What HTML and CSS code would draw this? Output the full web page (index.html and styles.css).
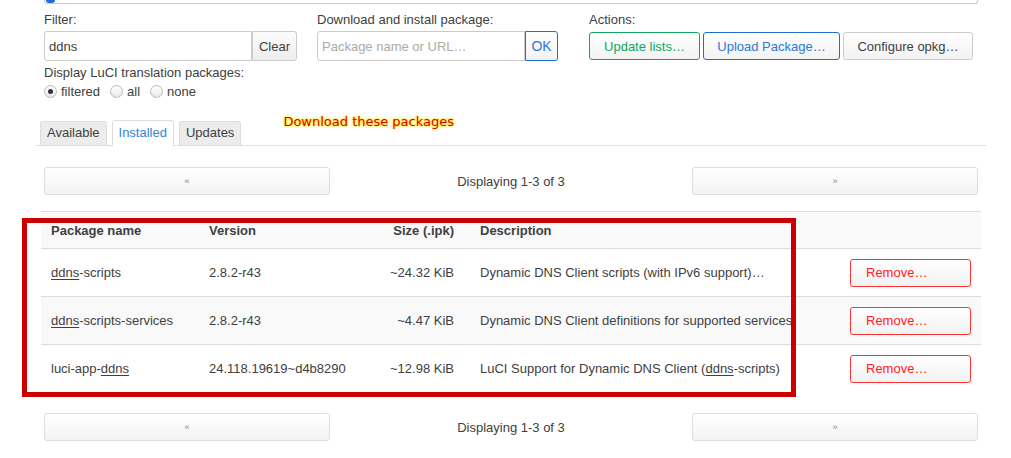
FILE: index.html
```html
<!DOCTYPE html>
<html>
<head>
<meta charset="utf-8">
<link rel="stylesheet" href="styles.css">
</head>
<body>
<div class="page">
  <div class="topbar"><span class="thumb"></span></div>

  <div class="controls">
    <div class="ctl ctl-filter">
      <div class="lbl">Filter:</div>
      <div class="group">
        <input class="inp inp-filter" type="text" value="ddns">
        <button class="btn btn-addon">Clear</button>
      </div>
      <div class="lbl lbl2">Display LuCI translation packages:</div>
      <div class="radios">
        <span class="radio checked"></span><span class="rlbl">filtered</span>
        <span class="radio"></span><span class="rlbl">all</span>
        <span class="radio"></span><span class="rlbl">none</span>
      </div>
    </div>
    <div class="ctl ctl-dl">
      <div class="lbl">Download and install package:</div>
      <div class="group">
        <input class="inp inp-dl" type="text" placeholder="Package name or URL…">
        <button class="btn btn-ok">OK</button>
      </div>
    </div>
    <div class="ctl ctl-actions">
      <div class="lbl">Actions:</div>
      <div class="actions">
        <button class="btn btn-green">Update lists…</button>
        <button class="btn btn-blue">Upload Package…</button>
        <button class="btn btn-gray">Configure opkg…</button>
      </div>
    </div>
  </div>

  <div class="tabs">
    <span class="tab">Available</span>
    <span class="tab active">Installed</span>
    <span class="tab">Updates</span>
    <span class="note">Download these packages</span>
  </div>

  <div class="pager">
    <button class="pbtn">«</button>
    <span class="ptext">Displaying 1-3 of 3</span>
    <button class="pbtn">»</button>
  </div>

  <div class="tablewrap">
    <table class="pkgs">
      <thead>
        <tr><th class="c1">Package name</th><th class="c2">Version</th><th class="c3">Size (.ipk)</th><th class="c4">Description</th><th class="c5"></th></tr>
      </thead>
      <tbody>
        <tr><td class="c1"><u>ddns</u>-scripts</td><td class="c2">2.8.2-r43</td><td class="c3">~24.32 KiB</td><td class="c4">Dynamic DNS Client scripts (with IPv6 support)…</td><td class="c5"><button class="btn btn-red">Remove…</button></td></tr>
        <tr class="alt"><td class="c1"><u>ddns</u>-scripts-services</td><td class="c2">2.8.2-r43</td><td class="c3">~4.47 KiB</td><td class="c4">Dynamic DNS Client definitions for supported services</td><td class="c5"><button class="btn btn-red">Remove…</button></td></tr>
        <tr><td class="c1">luci-app-<u>ddns</u></td><td class="c2">24.118.19619~d4b8290</td><td class="c3">~12.98 KiB</td><td class="c4">LuCI Support for Dynamic DNS Client (<u>ddns</u>-scripts)</td><td class="c5"><button class="btn btn-red">Remove…</button></td></tr>
      </tbody>
    </table>
    <div class="redbox"></div>
  </div>

  <div class="pager pager2">
    <button class="pbtn">«</button>
    <span class="ptext">Displaying 1-3 of 3</span>
    <button class="pbtn">»</button>
  </div>
</div>
</body>
</html>
```

FILE: styles.css
```css
html, body {
  margin: 0;
  padding: 0;
  background: #fff;
}
body {
  font-family: "Liberation Sans", Arial, sans-serif;
  font-size: 13px;
  color: #404040;
}
.page {
  width: 1011px;
  height: 458px;
  overflow: hidden;
}
.topbar {
  position: relative;
  margin-left: 44px;
  width: 932px;
  height: 3px;
  border: 1px solid #ccc;
  border-top: none;
  border-radius: 0 0 3px 3px;
}
.thumb {
  position: absolute;
  left: 1px;
  top: -2px;
  width: 9px;
  height: 5px;
  border-radius: 0 0 3px 3px;
  background: #1f6fd1;
}
.controls {
  display: flex;
  margin-left: 44px;
  margin-top: 7px;
}
.ctl-filter { width: 253px; }
.ctl-dl { width: 241px; margin-left: 20px; }
.ctl-actions { margin-left: 31px; }
.lbl {
  line-height: 18px;
  height: 18px;
  color: #404040;
}
.group {
  display: flex;
  margin-top: 2px;
  height: 30px;
}
.inp {
  box-sizing: border-box;
  height: 30px;
  border: 1px solid #ccc;
  border-radius: 3px 0 0 3px;
  padding: 0 4px;
  font-family: "Liberation Sans", Arial, sans-serif;
  font-size: 13px;
  color: #404040;
  outline: none;
  margin: 0;
}
.inp::placeholder { color: #aaa; }
.inp-filter { width: 208px; }
.inp-dl { width: 208px; }
.btn {
  box-sizing: border-box;
  font-family: "Liberation Sans", Arial, sans-serif;
  font-size: 13px;
  background: linear-gradient(#fff, #f2f2f2);
  border: 1px solid #ccc;
  border-radius: 3px;
  color: #404040;
  padding: 0 12px;
  margin: 0;
  cursor: pointer;
}
.btn-addon {
  width: 45px;
  height: 30px;
  padding: 0;
  border-left: 1px solid #ccc;
  border-radius: 0 3px 3px 0;
  background: linear-gradient(#fcfcfc, #eeeeee);
}
.btn-ok {
  width: 33px;
  height: 30px;
  padding: 0;
  border: 1px solid #1f6fd1;
  border-radius: 0 3px 3px 0;
  color: #2f78d6;
  font-size: 14px;
}
.actions {
  display: flex;
  gap: 3px;
  margin-top: 3px;
}
.actions .btn { height: 28px; }
.btn-green {
  width: 111px;
  border-color: #12a560;
  color: #13a562;
}
.btn-blue {
  width: 137px;
  border-color: #1f6fd1;
  color: #2f78d6;
}
.btn-gray {
  width: 130px;
  color: #404040;
}
.lbl2 { margin-top: 3px; }
.radios {
  display: flex;
  align-items: center;
  height: 18px;
  margin-top: 0;
}
.radio {
  box-sizing: border-box;
  width: 13px;
  height: 13px;
  border: 1px solid #bbb;
  border-radius: 50%;
  background: linear-gradient(#fff, #e8e8e8);
  position: relative;
}
.radio.checked::after {
  content: "";
  position: absolute;
  left: 3px;
  top: 3px;
  width: 5px;
  height: 5px;
  border-radius: 50%;
  background: #333;
}
.rlbl { margin: 0 10px 0 4px; }
.tabs {
  display: flex;
  align-items: flex-end;
  margin-left: 36px;
  width: 946px;
  height: 25px;
  margin-top: 20px;
  border-bottom: 1px solid #ddd;
  padding-left: 4px;
}
.tab {
  box-sizing: border-box;
  height: 24px;
  line-height: 22px;
  padding: 0 6px;
  border: 1px solid #ddd;
  border-bottom: none;
  border-radius: 3px 3px 0 0;
  background: #ececec;
  margin-right: 5px;
  color: #404040;
}
.tab.active {
  height: 26px;
  line-height: 24px;
  background: #fff;
  color: #2f84d8;
  margin-bottom: -1px;
}
.note {
  margin-left: 37px;
  align-self: flex-start;
  margin-top: -6px;
  font-family: "DejaVu Sans", sans-serif;
  font-size: 13px;
  color: #dd0000;
  text-shadow: 0 0 2px #ffee44, 0 0 2px #ffee44, 0 0 3px #ffee44, 0 0 3px #ffee44;
}
.pager {
  display: flex;
  align-items: center;
  justify-content: space-between;
  margin-left: 44px;
  width: 934px;
  margin-top: 21px;
  height: 28px;
}
.pbtn {
  box-sizing: border-box;
  width: 286px;
  height: 28px;
  border: 1px solid #ddd;
  border-radius: 3px;
  background: linear-gradient(#fff, #f3f3f3);
  color: #888;
  font-family: "Liberation Sans", Arial, sans-serif;
  font-size: 9px;
  padding: 0;
}
.ptext { color: #404040; }
.pager2 { margin-top: 21px; }
.tablewrap {
  position: relative;
  margin-top: 16px;
}
.pkgs {
  margin-left: 41px;
  width: 940px;
  border-collapse: collapse;
  table-layout: fixed;
}
.pkgs th, .pkgs td {
  border-top: 1px solid #ddd;
  padding: 0 10px;
  text-align: left;
  white-space: nowrap;
  overflow: visible;
}
.pkgs th {
  height: 36px;
  font-weight: bold;
  color: #404040;
  background: #f9f9f9;
}
.pkgs td { height: 47px; }
.pkgs tr.alt td { background: #f9f9f9; }
.pkgs u { text-decoration: underline; text-underline-offset: 2px; }
.c1 { width: 138px; }
.c2 { width: 150px; }
.pkgs .c3 { width: 75px; text-align: right; padding-right: 16px; }
.c4 { width: 350px; }
.pkgs .c5 { padding-left: 10px; }
.btn-red {
  width: 121px;
  height: 28px;
  border-color: #f33;
  color: #f22;
  text-align: left;
  padding-left: 15px;
}
.redbox {
  position: absolute;
  left: 22px;
  top: 7px;
  width: 774px;
  height: 179px;
  border: 5px solid #cc0000;
  box-sizing: border-box;
  pointer-events: none;
}
```
